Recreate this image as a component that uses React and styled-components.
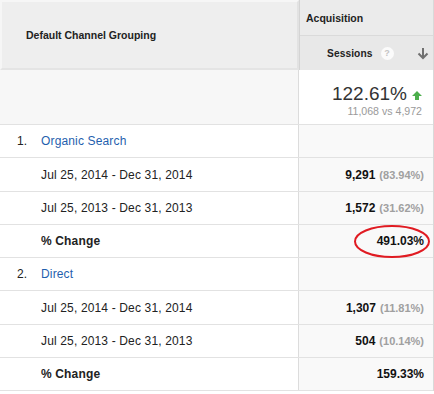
import React from 'react';
import styled, { createGlobalStyle } from 'styled-components';

const GlobalStyle = createGlobalStyle`
  body {
    margin: 0;
    background: #ffffff;
    font-family: Arial, 'Liberation Sans', sans-serif;
  }
`;

// 전체 표
const Table = styled.div`
  width: 433px;
  border-right: 1px solid #d9d9d9;
  display: flex;
  flex-direction: column;
`;

const Row = styled.div`
  display: flex;
  height: ${p => p.h}px;
  border-bottom: 1px solid #e2e2e2;
`;

// 헤더
const HeaderRow = styled.div`
  display: flex;
  height: 70px;
`;

const HeaderLeft = styled.div`
  width: 299px;
  flex-shrink: 0;
  box-sizing: border-box;
  background: #eeeeee;
  border: 2px solid #f6f6f6;
  border-right: 2px solid #e2e2e2;
  border-bottom: 2px solid #e4e4e4;
  display: flex;
  align-items: center;
  padding-left: 24px;
  font-size: 10.5px;
  font-weight: bold;
  color: #222;
`;

const HeaderRight = styled.div`
  flex: 1;
  display: flex;
  flex-direction: column;
  border-left: 1px solid #d4d4d4;
`;

const GroupHead = styled.div`
  height: 35px;
  background: #ebebeb;
  border-bottom: 1px solid #dadada;
  display: flex;
  align-items: center;
  padding-left: 6px;
  font-size: 10.5px;
  font-weight: bold;
  color: #222;
`;

const MetricHead = styled.div`
  flex: 1;
  background: #e8e8e8;
  display: flex;
  align-items: center;
  padding-left: 27px;
  padding-right: 4px;
  font-size: 10.2px;
  font-weight: bold;
  letter-spacing: 0.1px;
  color: #222;
`;

const Help = styled.span`
  width: 13px;
  height: 13px;
  border-radius: 50%;
  background: #fbfbfb;
  color: #c4c4c4;
  font-size: 9px;
  font-weight: bold;
  display: inline-flex;
  align-items: center;
  justify-content: center;
  margin-left: 8px;
`;

const Spacer = styled.div`
  flex-grow: 1;
`;

// 왼쪽 / 오른쪽 셀
const LeftCell = styled.div`
  width: 299px;
  flex-shrink: 0;
  box-sizing: border-box;
  border-right: 1px solid #dcdcdc;
  background: ${p => p.bg || '#ffffff'};
  display: flex;
  align-items: center;
  padding-left: ${p => (p.indent ? 41 : 17)}px;
  font-size: 12px;
  letter-spacing: 0.15px;
  font-weight: ${p => (p.bold ? 'bold' : 'normal')};
  color: #222;
`;

const RightCell = styled.div`
  flex: 1;
  position: relative;
  background: ${p => p.bg || '#f9f9f9'};
  display: flex;
  align-items: center;
  justify-content: flex-end;
  padding-right: 9px;
  font-size: 12px;
  font-weight: bold;
  color: #111;
`;

const Num = styled.span`
  width: 24px;
  color: #222;
`;

const Link = styled.span`
  color: #1f5fae;
`;

const Pct = styled.span`
  font-size: 11px;
  font-weight: bold;
  color: #a0a0a0;
  margin-left: 4px;
`;

const Summary = styled.div`
  display: flex;
  flex-direction: column;
  align-items: flex-end;
  padding-top: 4px;
  margin-right: 2px;
`;

const Big = styled.div`
  display: flex;
  align-items: center;
  font-size: 19px;
  font-weight: normal;
  color: #333;
  line-height: 26px;
`;

const Small = styled.div`
  font-size: 10.6px;
  font-weight: normal;
  color: #9a9a9a;
  margin-top: -2px;
`;

const Circle = styled.svg`
  position: absolute;
  left: 55px;
  top: 0px;
  overflow: visible;
`;

const rows = [
  {
    no: '1.',
    name: 'Organic Search',
    a: ['9,291', '(83.94%)'],
    b: ['1,572', '(31.62%)'],
    change: '491.03%',
    marked: true,
  },
  {
    no: '2.',
    name: 'Direct',
    a: ['1,307', '(11.81%)'],
    b: ['504', '(10.14%)'],
    change: '159.33%',
  },
];

const App = () => {
  return (
    <>
      <GlobalStyle />
      <Table>
        <HeaderRow>
          <HeaderLeft>Default Channel Grouping</HeaderLeft>
          <HeaderRight>
            <GroupHead>Acquisition</GroupHead>
            <MetricHead>
              Sessions
              <Help>?</Help>
              <Spacer />
              <svg width="12" height="13" viewBox="0 0 12 13">
                <path d="M6 1v10M1.5 6.5L6 11l4.5-4.5" stroke="#707070" strokeWidth="2" fill="none" />
              </svg>
            </MetricHead>
          </HeaderRight>
        </HeaderRow>

        <Row h={54}>
          <LeftCell bg="#f7f7f7" />
          <RightCell bg="#ffffff">
            <Summary>
              <Big>
                122.61%
                <svg width="10" height="9" viewBox="0 0 10 9" style={{ marginLeft: 5, marginTop: 2 }}>
                  <path d="M5 0L10 5H7V9H3V5H0Z" fill="#4cae4c" />
                </svg>
              </Big>
              <Small>11,068 vs 4,972</Small>
            </Summary>
          </RightCell>
        </Row>

        {rows.map(r => (
          <React.Fragment key={r.no}>
            <Row h={32}>
              <LeftCell>
                <Num>{r.no}</Num>
                <Link>{r.name}</Link>
              </LeftCell>
              <RightCell />
            </Row>
            <Row h={33}>
              <LeftCell indent>Jul 25, 2014 - Dec 31, 2014</LeftCell>
              <RightCell>
                {r.a[0]}
                <Pct>{r.a[1]}</Pct>
              </RightCell>
            </Row>
            <Row h={32}>
              <LeftCell indent>Jul 25, 2013 - Dec 31, 2013</LeftCell>
              <RightCell>
                {r.b[0]}
                <Pct>{r.b[1]}</Pct>
              </RightCell>
            </Row>
            <Row h={32}>
              <LeftCell indent bold>% Change</LeftCell>
              <RightCell>
                {r.change}
                {r.marked && (
                  <Circle width="76" height="33" viewBox="0 0 76 33">
                    <ellipse cx="38" cy="16.5" rx="37" ry="15.5" fill="none" stroke="#e01b22" strokeWidth="2" />
                  </Circle>
                )}
              </RightCell>
            </Row>
          </React.Fragment>
        ))}
      </Table>
    </>
  );
};

export default App;
